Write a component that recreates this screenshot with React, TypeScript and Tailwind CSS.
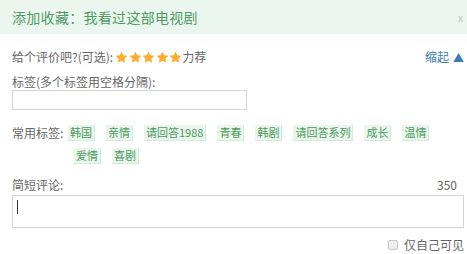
import React from "react";

const Star = () => (
  <svg width="13" height="13" viewBox="0 0 24 24" className="block">
    <path
      d="M12 1.2l3.3 6.8 7.5.9-5.5 5.2 1.4 7.4L12 17.9l-6.7 3.6 1.4-7.4-5.5-5.2 7.5-.9z"
      fill="#ffac2d"
    />
  </svg>
);

const Tag = ({ t }: { t: string }) => (
  <span className="shrink-0 whitespace-nowrap inline-block h-[16px] leading-[15px] px-[2px] text-[11px] text-[#4a9a60] bg-[#eaf6ec] border-r border-b border-[#d3ebd8]">
    {t}
  </span>
);

export default function App() {
  const row1 = ["韩国", "亲情", "请回答1988", "青春", "韩剧", "请回答系列", "成长", "温情"];
  const row2 = ["爱情", "喜剧"];
  return (
    <div
      className="w-[467px] h-[254px] bg-white overflow-hidden text-[#666]"
      style={{ fontFamily: '"Noto Sans CJK SC", "Microsoft YaHei", sans-serif' }}
    >
      <div className="h-[34px] bg-[#ebf6ee] flex items-center justify-between pl-[12px] pr-[4px]">
        <span className="text-[14px] text-[#4f9a66] tracking-[0.3px]">添加收藏：我看过这部电视剧</span>
        <span className="text-[10px] text-[#c4c4c4]">x</span>
      </div>
      <div className="pl-[12px] pr-[3px]">
        <div className="mt-[15px] h-[16px] flex items-center justify-between">
          <div className="flex items-center text-[12px] whitespace-nowrap">
            <span>给个评价吧?(可选):</span>
            <span className="flex ml-[2px] gap-[0.5px]">
              <Star />
              <Star />
              <Star />
              <Star />
              <Star />
            </span>
            <span>力荐</span>
          </div>
          <div className="flex items-center text-[12px] text-[#3a7db3]">
            <span>缩起</span>
            <span className="ml-[4px] text-[11px]">▲</span>
          </div>
        </div>
        <div className="mt-[9px] h-[16px] leading-[16px] text-[12px]">标签(多个标签用空格分隔):</div>
        <div className="w-[235px] h-[20px] border border-[#d5d5d5]"></div>
        <div className="mt-[15px] flex items-center h-[16px]">
          <span className="text-[12px] w-[56px] shrink-0 whitespace-nowrap">常用标签:</span>
          <div className="flex gap-[11px]">
            {row1.map((t) => (
              <Tag key={t} t={t} />
            ))}
          </div>
        </div>
        <div className="mt-[7px] flex gap-[11px] pl-[62px] h-[16px]">
          {row2.map((t) => (
            <Tag key={t} t={t} />
          ))}
        </div>
        <div className="mt-[13px] h-[16px] flex items-center justify-between text-[12px]">
          <span>简短评论:</span>
          <span className="pr-[7px]">350</span>
        </div>
        <div className="mt-[2px] h-[33px] border border-[#d5d5d5] pl-[4px] pt-[4px]">
          <div className="w-px h-[14px] bg-[#333]"></div>
        </div>
        <div className="mt-[9px] h-[16px] flex items-center justify-end text-[12px] whitespace-nowrap">
          <span className="w-[10px] h-[10px] border border-[#c8c8c8] bg-[#eee] rounded-[2px] mr-[6px]"></span>
          <span>仅自己可见</span>
        </div>
      </div>
    </div>
  );
}
